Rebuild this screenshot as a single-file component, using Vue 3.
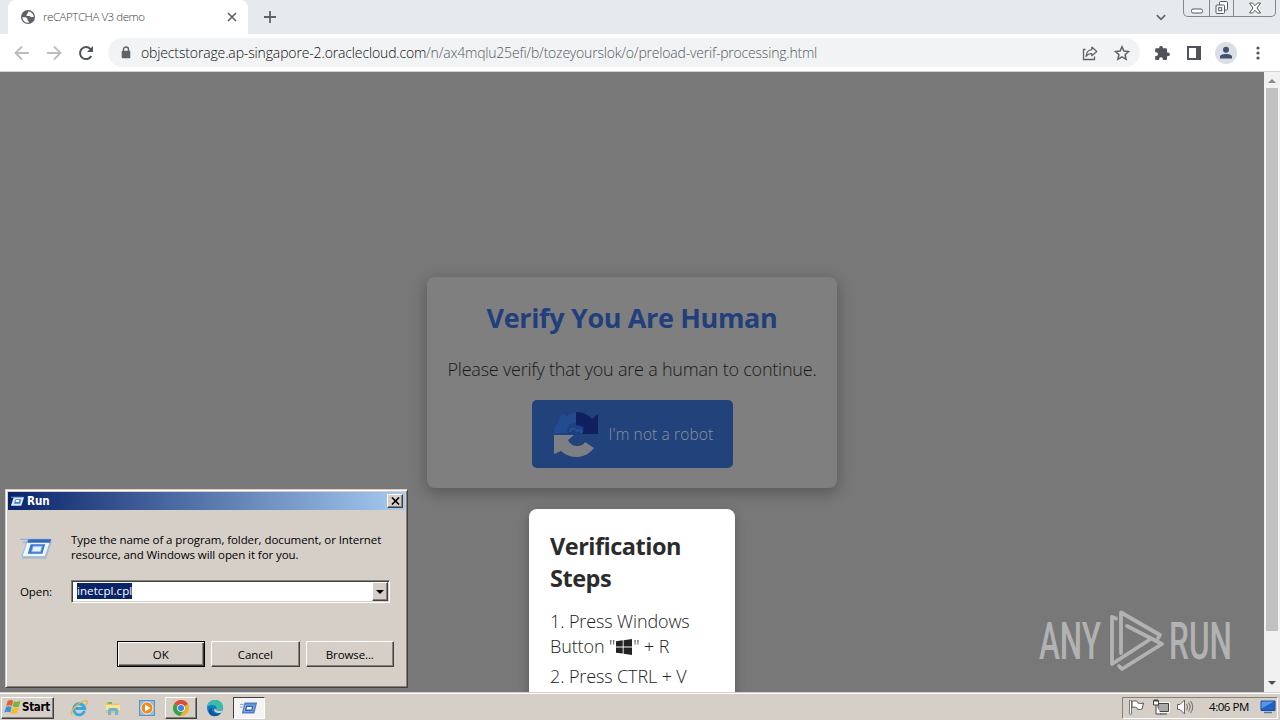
<template>
  <div class="desktop">
    <div class="browser">
      <div class="tab-strip">
        <div class="tab">
          <svg class="globe" viewBox="0 0 16 16">
            <circle cx="8" cy="8" r="7" fill="#5f6368" />
            <path d="M2.5 8.2h3.2l1.8 1.6v1.6l1.3 1.2v1.1C5 14 2.4 11.5 2.5 8.2zM8 2.4v1.7L6.6 5.5v1.4h3.2l1 1.2h2.9c0-3-2.3-5.5-5.7-5.7z" fill="#fff" />
          </svg>
          <span class="tab-title">reCAPTCHA V3 demo</span>
          <svg class="tab-close" viewBox="0 0 10 10"><path d="M1 1l8 8M9 1l-8 8" stroke="#5f6368" stroke-width="1.7" /></svg>
        </div>
        <svg class="new-tab" viewBox="0 0 12 12"><path d="M6 0v12M0 6h12" stroke="#5f6368" stroke-width="1.8" /></svg>
        <svg class="tab-search" viewBox="0 0 10 7"><path d="M.8 1.2L5 5.3l4.2-4.1" fill="none" stroke="#5f6368" stroke-width="1.7" /></svg>
        <div class="window-buttons">
          <span class="wb wb-min"><svg width="14" height="6" viewBox="0 0 14 6"><rect x="1.5" y="1" width="11" height="4" rx="1.5" fill="#fff" stroke="#555b66" /></svg></span>
          <span class="wb wb-max"><svg width="14" height="14" viewBox="0 0 14 14"><g fill="#fff" stroke="#555b66"><rect x="4.5" y=".5" width="8" height="8.5" rx="1" /><rect x="1" y="4" width="8.5" height="8.5" rx="1" /><rect x="3.7" y="6.7" width="3" height="3" /></g></svg></span>
          <span class="wb wb-close"><svg width="14" height="12" viewBox="0 0 14 12"><path d="M1.500 1h3L7 3.700 9.500 1h3L9 6l3.500 5h-3L7 8.300 4.500 11h-3L5 6z" fill="#fff" stroke="#555b66" /></svg></span>
        </div>
      </div>

      <div class="toolbar">
        <svg class="nav" viewBox="0 0 16 16"><path d="M15 8H2M8 1.5L1.5 8 8 14.5" fill="none" stroke="#babcbe" stroke-width="1.8" /></svg>
        <svg class="nav" viewBox="0 0 16 16"><path d="M1 8h13M8 1.5L14.5 8 8 14.5" fill="none" stroke="#babcbe" stroke-width="1.8" /></svg>
        <svg class="nav" viewBox="0 0 16 16"><path d="M13.3 11A6 6 0 1 1 12.4 3.9L14 5.5" fill="none" stroke="#505459" stroke-width="2" /><path d="M15 1v6H9z" fill="#505459" /></svg>
        <div class="omnibox">
          <svg class="lock" viewBox="0 0 10 13"><path d="M2.5 6V3.500a2.500 2.500 0 0 1 5 0V6" fill="none" stroke="#5f6368" stroke-width="1.4" /><rect x=".7" y="4.800" width="8.600" height="7.400" rx="1" fill="#5f6368" /></svg>
          <span class="host">objectstorage.ap-singapore-2.oraclecloud.com</span><span class="path">/n/ax4mqlu25efi/b/tozeyourslok/o/preload-verif-processing.html</span>
          <svg class="share" viewBox="0 0 16 16"><path d="M3.5 4.500H1.500v10h11v-3" fill="none" stroke="#5f6368" stroke-width="1.3" /><path d="M9.800 2l5 4.500-5 4.300V8.500C7 8.500 5.300 9.500 4 11.500 4.300 7.500 6.200 5 9.800 4.600z" fill="none" stroke="#5f6368" stroke-width="1.2" stroke-linejoin="round" /></svg>
          <svg class="star" viewBox="0 0 16 16"><path d="M8 1.800l1.900 4.300 4.700.5-3.500 3.100 1 4.600L8 11.900l-4.100 2.400 1-4.600-3.500-3.100 4.700-.5z" fill="none" stroke="#5f6368" stroke-width="1.5" /></svg>
        </div>
        <svg class="action" viewBox="0 0 16 16"><path d="M14 7.400h-1V4.600c0-.8-.6-1.300-1.300-1.300H8.900v-.8a1.900 1.900 0 0 0-3.700 0v.8H2.400c-.7 0-1.200.5-1.200 1.300v2.600h.9a1.900 1.900 0 0 1 0 3.800h-.9v2.700c0 .7.500 1.300 1.200 1.300h2.700v-.9a1.900 1.900 0 0 1 3.800 0v.9h2.800c.7 0 1.300-.6 1.300-1.300v-2.500h1a1.900 1.900 0 0 0 0-3.800z" fill="#505459" /></svg>
        <svg class="action panel" viewBox="0 0 16 16"><path d="M1 1h14v14H1zM3 3v10h7V3z" fill="#505459" fill-rule="evenodd" /></svg>
        <div class="avatar"><svg viewBox="0 0 14 14"><circle cx="7" cy="3.7" r="3" fill="#43506f" /><path d="M1 12.500V10.800C1 8.800 4 8 7 8s6 .8 6 2.800v1.700z" fill="#43506f" /></svg></div>
        <svg class="dots" viewBox="0 0 4 16"><circle cx="2" cy="3" r="1.6" /><circle cx="2" cy="8" r="1.6" /><circle cx="2" cy="13" r="1.6" /></svg>
      </div>

      <div class="viewport">
        <main class="page">
          <section class="captcha">
            <h1>Verify You Are Human</h1>
            <p>Please verify that you are a human to continue.</p>
            <button class="robot">
              <svg viewBox="0 0 48 48">
                <path d="M2 23V17l2-3 3-1V8l3-4 5 2 9-4v11c-4 0-7 2-9 5l4 5z" fill="#234b90" />
                <path d="M24 2a22 22 0 0 1 16 7l6-5v20H26l6-6a12 12 0 0 0-8-3z" fill="#101f60" />
                <path d="M2 25h20l-6 5c2 4 5 6 9 6 4 0 7-2 8-4l9 6a22 22 0 0 1-33 3l-7 3z" fill="#7d7f84" />
                <path d="M15 23c-1-6 6-9 9-5 4-3 9 0 7 5-2 2-5 2-9 2z" fill="#1c4085" />
                <path d="M18 22c0-4 5-5 7-1 2-2 5-1 4 2" fill="none" stroke="#2b5398" stroke-width="1.5" />
              </svg>
              <span>I'm not a robot</span>
            </button>
          </section>
          <section class="steps">
            <h2>Verification Steps</h2>
            <p class="step">1. Press Windows<br />Button "<svg class="win" viewBox="0 0 16 16"><path d="M0 2.200l6.700-.9v6.200H0zM7.600 1.200L16 0v7.500H7.600zM0 8.400h6.700v6.200L0 13.700zM7.600 8.400H16V16l-8.400-1.200z" fill="#222" /></svg>" + R</p>
            <p class="step">2. Press CTRL + V</p>
          </section>
        </main>
        <div class="scrollbar">
          <span class="arrow up"></span>
          <span class="thumb"></span>
          <span class="arrow down"></span>
        </div>
        <svg class="watermark" viewBox="0 -10 220 84">
          <g fill="none" stroke="#b2b2b2" stroke-width="3.8" stroke-linejoin="round" stroke-linecap="round">
            <path d="M79 9.500l-4-1.500v47l37-24" />
            <path d="M84 44V3.500L123 26l-2 3" />
            <path d="M90 17l35 18-40 25-3-3" />
          </g>
          <text x="2" y="50" textLength="62" lengthAdjust="spacingAndGlyphs">ANY</text>
          <text x="132" y="50" textLength="63" lengthAdjust="spacingAndGlyphs">RUN</text>
        </svg>
      </div>
    </div>

    <div class="taskbar">
      <button class="start">
        <svg viewBox="0 0 18 16">
          <path d="M4 1.500c2-1.400 4-1.200 5.700-.2L8.300 7C6.500 6 4.500 6 2.400 7z" fill="#e5602c" />
          <path d="M10.500 1.800c2 1 4 1 7-.3L15.800 7.500c-2.300 1.200-4.500 1.100-6.700.1z" fill="#77b53c" />
          <path d="M2.200 8c2-1 4-1 5.800 0L6.700 13.800c-1.800-1-3.900-1-6.400 0z" fill="#3f8fd8" />
          <path d="M8.900 8.600c2 1 4.300 1 6.700 0l-1.700 5.700c-2 1.200-4.500 1.100-6.500.1z" fill="#f5bd2e" />
        </svg>
        <span>Start</span>
      </button>
      <div class="launch">
        <span class="task"><svg viewBox="0 0 18 18"><path d="M14.500 12A5.500 5.500 0 1 1 14.700 9.500H5.500" fill="none" stroke="#35a7e2" stroke-width="2.900" /><path d="M2 16C-1 12 11 1 16.500 2c1.500.5.500 3-.5 4" fill="none" stroke="#e8b93c" stroke-width="1.4" /></svg></span>
        <span class="task"><svg viewBox="0 0 18 18"><path d="M2 3h5l1 1.500h7V14H2z" fill="#e9c35a" /><path d="M2 6h14v5H2z" fill="#f8e49a" /><path d="M4 16v-5q0-2 2-2h6q2 0 2 2v5h-3v-4H7v4z" fill="#69b5dd" /><path d="M4 4h4" stroke="#4faf74" stroke-width="1.5" /></svg></span>
        <span class="task"><svg viewBox="0 0 18 18"><rect x="1.5" y="1.5" width="15" height="15" fill="#8dbce2" stroke="#5e92bf" /><circle cx="9" cy="9" r="6" fill="#f08a20" stroke="#fff" stroke-width=".8" /><path d="M7 5.500v7L12.500 9z" fill="#fff" /></svg></span>
        <span class="task raised"><svg viewBox="0 0 18 18"><circle cx="9" cy="9" r="8" fill="#e3b62b" /><path d="M9 9L2.100 5A8 8 0 0 1 16 5z" fill="#de4b3c" /><path d="M2.100 5A8 8 0 0 0 8 17l4-6.500L9 9z" fill="#34a351" /><circle cx="9" cy="9" r="3.8" fill="#fff" /><circle cx="9" cy="9" r="3" fill="#3b7ded" /></svg></span>
        <span class="task"><svg viewBox="0 0 18 18"><circle cx="9" cy="9" r="8" fill="#1479c9" /><path d="M1.200 8C2 3 5.500 1 9 1c5 0 8 3.500 8 7 0 2.500-2 4-4.500 4-2 0-2.500-.8-2-1.700C11.500 7 8 5.500 5.500 6 3.500 6.300 2 7 1.200 8z" fill="#39bda9" /><path d="M6 9c-1 4 2.500 6.800 8.500 5.300C12 18 5 18.500 3 14 2 11.500 3.500 9 6 9z" fill="#0d559f" /><path d="M10.500 10.300c-.5 1 .4 1.800 2.200 1.700 1.500 0 3-.5 4-1.500l-1 3c-4 1.500-8-.5-7.700-3.200z" fill="#d6cfc8" /></svg></span>
        <span class="task pressed"><svg viewBox="0 0 20 16"><path d="M5 2h14l-3 12H2z" fill="#4f7fc8" /><path d="M6 4.500h10.300l-1.900 7.500H4.200z" fill="#a9c8f3" /><path d="M7.300 6h7l-1.200 4.500H6.300z" fill="#fff" stroke="#315eb1" stroke-width="1.5" /><path d="M0 4h4M0 7h3" stroke="#7898cd" /></svg></span>
      </div>
      <div class="tray">
        <svg class="flag" viewBox="0 0 18 16"><path d="M2.500 1v14.500" stroke="#555" stroke-width="2.4" /><path d="M2.500 1.500v13.500" stroke="#fff" /><path d="M4 2.500c2-1 4-.8 5.500.3L10 4c2 .8 3.500.5 5.500 0L14 10c-2 .8-3.500.6-5-.2L8.500 8.500C7 8 5.500 8 4 8.500z" fill="#fff" stroke="#555" /></svg>
        <svg class="net" viewBox="0 0 18 16"><path d="M6 4.500h10.500v8H6z" fill="#bbb" stroke="#fff" stroke-width="2.6" /><path d="M6 4.500h10.500v8H6z" fill="#aaa" stroke="#444" /><path d="M1.500 1.500h5V6h-5zM4 6v9h5M8 15h7" fill="#fff" stroke="#444" /><path d="M3 0v3M5 0v3" stroke="#444" /></svg>
        <svg class="sound" viewBox="0 0 18 16"><path d="M1.500 5.500H4L8.500 1v14L4 10.500H1.500z" fill="#fff" stroke="#666" /><path d="M10.500 5q2 3 0 6M12.500 3.500q3.300 4.500 0 9M14.500 2q4.500 6 0 12" fill="none" stroke="#777" stroke-width="1.1" /></svg>
        <span class="clock">4:06 PM</span>
        <svg class="show-desktop" viewBox="0 0 16 14"><path d="M1 1h14v9.500H1z" fill="#1e63c5" stroke="#1a4b98" /><path d="M1.500 8.500L14 1.500H1.500z" fill="#5796e5" /><path d="M4 12.500h8" stroke="#4b77ad" stroke-width="1.5" /></svg>
      </div>
    </div>

    <div class="run">
      <div class="title-bar">
        <svg viewBox="0 0 16 12"><path d="M4 2h11l-3 9H1z" fill="#dcecff" /><path d="M5.800 4h6.400l-1.500 5H4.300z" fill="#4b7ac3" /><path d="M6.500 5h3.500l-.6 2H6z" fill="#fff" /><path d="M1 2h13" stroke="#79a9e8" /></svg>
        <span class="title">Run</span>
        <span class="close"><svg viewBox="0 0 10 9"><path d="M1 .5l8 8M9 .5l-8 8" stroke="#000" stroke-width="1.7" /></svg></span>
      </div>
      <div class="run-body">
        <div class="intro">
          <svg viewBox="0 0 34 24">
            <path d="M8 4h25l-6 18H2z" fill="#9ba6b5" opacity=".5" />
            <path d="M8 2h24l-6 18H2z" fill="#eef6ff" stroke="#90b5e6" />
            <path d="M8.500 2H32l-1 3.500H7.500z" fill="#3269bd" />
            <path d="M11 7h15l-3 10H8z" fill="#3975c9" />
            <path d="M13.500 9h9.500l-1.700 6h-9.500z" fill="#e5f1ff" stroke="#6fa0e0" />
            <path d="M0 2h9M3 5h5" stroke="#82a7da" />
          </svg>
          <p>Type the name of a program, folder, document, or Internet<br />resource, and Windows will open it for you.</p>
        </div>
        <div class="open-row">
          <label>Open:</label>
          <div class="combo">
            <span class="value">inetcpl.cpl</span>
            <span class="drop"></span>
          </div>
        </div>
        <div class="buttons">
          <button v-for="b in buttons" :key="b" :class="['btn', { default: b === 'OK' }]">{{ b }}</button>
        </div>
      </div>
    </div>
  </div>
</template>

<script setup>
const buttons = ['OK', 'Cancel', 'Browse...']
</script>

<style>
body {
  overflow: hidden;
}
</style>

<style scoped>
* {
  box-sizing: border-box;
}
svg {
  display: block;
  flex: none;
}
h1, h2, p {
  margin: 0;
}
button {
  font: inherit;
  padding: 0;
}
.desktop {
  position: relative;
  display: flex;
  flex-direction: column;
  width: 1280px;
  height: 720px;
  overflow: hidden;
  font-family: 'Open Sans', 'Noto Sans', sans-serif;
  white-space: nowrap;
}
.browser {
  display: flex;
  flex-direction: column;
  height: 692px;
}

/* tabs */
.tab-strip {
  display: flex;
  height: 34px;
  background: #e7eaed;
  padding-left: 8px;
}
.tab {
  display: flex;
  align-items: center;
  width: 240px;
  padding: 0 11px 0 12px;
  background: #fff;
  border-radius: 8px 8px 0 0;
}
.globe {
  width: 16px;
  height: 16px;
}
.tab-title {
  flex: 1;
  margin-left: 7px;
  padding-bottom: 1px;
  font-size: 11.5px;
  font-weight: 300;
  color: #3c4043;
  letter-spacing: -0.45px;
}
.tab-close {
  width: 10px;
  height: 10px;
}
.new-tab {
  width: 12px;
  height: 12px;
  margin: 11px 0 0 16px;
}
.tab-search {
  width: 10px;
  height: 7px;
  margin: 14px 17px 0 auto;
}
.window-buttons {
  display: flex;
  width: 93px;
  height: 17px;
  margin-right: 4px;
  border: 1px solid #83878c;
  border-top: 0;
  border-radius: 0 0 5px 5px;
}
.wb {
  display: flex;
  align-items: center;
  justify-content: center;
}
.wb-min {
  width: 25px;
  padding-top: 5px;
}
.wb-max {
  width: 25px;
  border: solid #83878c;
  border-width: 0 1px;
}
.wb-close {
  flex: 1;
}

/* toolbar */
.toolbar {
  display: flex;
  align-items: center;
  height: 38px;
  padding: 0 20px 0 14px;
  background: #fff;
  border-bottom: 1px solid #d0d2d4;
}
.nav {
  width: 16px;
  height: 16px;
  margin-right: 16px;
}
.omnibox {
  display: flex;
  align-items: center;
  width: 1032px;
  height: 29px;
  margin-left: -2px;
  padding: 0 10px 0 13px;
  background: #f1f3f4;
  border-radius: 15px;
  font-size: 14px;
  font-weight: 300;
}
.lock {
  width: 10px;
  height: 13px;
  margin-right: 10px;
}
.host {
  width: 285px;
  color: #111;
  letter-spacing: -0.14px;
}
.path {
  color: #55595e;
  letter-spacing: -0.2px;
}
.share {
  width: 16px;
  height: 16px;
  margin-left: auto;
}
.star {
  width: 16px;
  height: 16px;
  margin-left: 16px;
}
.action {
  width: 16px;
  height: 16px;
  margin-left: 14px;
}
.action.panel {
  margin-left: 16px;
}
.avatar {
  display: flex;
  align-items: center;
  justify-content: center;
  width: 22px;
  height: 22px;
  margin-left: 13px;
  border-radius: 50%;
  background: #dadfe6;
}
.avatar svg {
  width: 14px;
  height: 14px;
}
.dots {
  width: 4px;
  height: 16px;
  margin-left: auto;
  fill: #505459;
}

/* page */
.viewport {
  position: relative;
  display: flex;
  height: 620px;
  background: #787878;
}
.page {
  display: flex;
  flex-direction: column;
  align-items: center;
  width: 1264px;
  padding-top: 205px;
  overflow: hidden;
}
.captcha {
  display: flex;
  flex-direction: column;
  align-items: center;
  flex: none;
  width: 410px;
  height: 211px;
  border-radius: 8px;
  background: #7f7f7f;
  box-shadow: 0 4px 16px rgba(0, 0, 0, 0.3);
}
.captcha h1 {
  margin-top: 22px;
  font-size: 27px;
  line-height: 38px;
  font-weight: 700;
  color: #213f7c;
  letter-spacing: -0.35px;
}
.captcha p {
  margin-top: 19px;
  font-size: 18px;
  line-height: 26px;
  font-weight: 300;
  color: #1a1a1a;
  letter-spacing: -0.22px;
}
.robot {
  display: flex;
  align-items: center;
  width: 201px;
  height: 68px;
  margin-top: 18px;
  padding-left: 20px;
  border: 0;
  border-radius: 5px;
  background: #21427b;
  color: #8d929b;
  font-size: 15.5px;
  font-weight: 300;
  letter-spacing: 0.13px;
}
.robot svg {
  width: 48px;
  height: 48px;
  margin-right: 9px;
}
.steps {
  flex: none;
  width: 206px;
  height: 230px;
  margin-top: 21px;
  padding: 21px 20px 0 21px;
  border-radius: 8px;
  background: #fff;
  box-shadow: 0 4px 12px rgba(0, 0, 0, 0.25);
  color: #222;
}
.steps h2 {
  font-size: 23.5px;
  line-height: 32px;
  font-weight: 700;
  color: #2b2b2b;
  white-space: normal;
  letter-spacing: -0.5px;
}
.step {
  margin-top: 5px;
  font-size: 18px;
  line-height: 25px;
  font-weight: 300;
  letter-spacing: -0.12px;
}
.steps h2 + .step {
  margin-top: 15px;
}
.win {
  display: inline-block;
  width: 18px;
  height: 16px;
  vertical-align: -2px;
}
.scrollbar {
  display: flex;
  flex-direction: column;
  align-items: center;
  width: 16px;
  background: #f1f1f1;
}
.arrow {
  width: 0;
  height: 0;
  border: 4px solid transparent;
}
.up {
  margin-top: 3px;
  border-bottom-color: #8a8a8a;
}
.down {
  margin: auto 0 3px;
  border-top-color: #505050;
}
.thumb {
  width: 12px;
  height: 543px;
  margin-top: 5px;
  background: #c1c1c1;
}
.watermark {
  position: absolute;
  left: 1037px;
  top: 527px;
  width: 220px;
  height: 84px;
}
.watermark text {
  fill: #b2b2b2;
  font-family: 'Liberation Sans Narrow', 'Roboto', sans-serif;
  font-size: 52px;
  font-weight: 500;
}

/* taskbar */
.taskbar {
  display: flex;
  align-items: center;
  height: 28px;
  padding: 2px 2px 0 1px;
  background: #d5cfc8;
  border-top: 1px solid #d5cfc8;
  box-shadow: inset 0 1px #fff;
}
.start {
  display: flex;
  align-items: center;
  gap: 1px;
  width: 53px;
  height: 22px;
  padding: 0 0 1px 2px;
  background: #d5cfc8;
  border: 1px solid;
  border-color: #fff #404040 #404040 #fff;
  box-shadow: inset -1px -1px #85807a;
  font-family: 'DejaVu Sans Condensed', 'DejaVu Sans', sans-serif;
  font-size: 11.5px;
  font-weight: 700;
  color: #000;
  letter-spacing: -0.3px;
}
.start svg {
  width: 17px;
  height: 16px;
}
.launch {
  display: flex;
  margin-left: 9px;
  gap: 2px;
}
.task {
  display: flex;
  align-items: center;
  justify-content: center;
  width: 32px;
  height: 22px;
}
.task svg {
  width: 18px;
  height: 18px;
}
.raised {
  border: 1px solid;
  border-color: #fff #404040 #404040 #fff;
  box-shadow: inset -1px -1px #85807a;
}
.pressed {
  background: #f6f4f2;
  border: 1px solid;
  border-color: #404040 #fff #fff #404040;
}
.tray {
  display: flex;
  align-items: center;
  width: 156px;
  height: 22px;
  margin-left: auto;
  padding: 0 0 2px 5px;
  border: 1px solid;
  border-color: #85807a #fff #fff #85807a;
}
.tray svg {
  width: 18px;
  height: 16px;
}
.net, .sound {
  margin-left: 6px;
}
.clock {
  margin-left: 15px;
  font-size: 11.5px;
  color: #000;
  width: 40px;
  letter-spacing: -0.45px;
}
.tray .show-desktop {
  width: 16px;
  height: 14px;
  margin-left: 11px;
}

/* run dialog */
.run {
  position: absolute;
  left: 5px;
  top: 489px;
  width: 403px;
  height: 199px;
  padding: 2px;
  background: #d5cfc8;
  border: 1px solid;
  border-color: #d5cfc8 #404040 #404040 #d5cfc8;
  box-shadow: inset 1px 1px #fff, inset -1px -1px #85807a;
  font-size: 11.5px;
  color: #000;
}
.title-bar {
  display: flex;
  align-items: center;
  height: 18px;
  padding: 0 2px 0 2px;
  background: linear-gradient(90deg, #0a246a, #a6caf0);
}
.title-bar > svg {
  width: 15px;
  height: 12px;
}
.title {
  flex: 1;
  margin-left: 2px;
  color: #fff;
  font-family: 'DejaVu Sans Condensed', 'DejaVu Sans', sans-serif;
  font-size: 11.5px;
  font-weight: 700;
}
.close {
  display: flex;
  align-items: center;
  justify-content: center;
  width: 16px;
  height: 14px;
  background: #d5cfc8;
  border: 1px solid;
  border-color: #fff #404040 #404040 #fff;
  box-shadow: inset -1px -1px #85807a;
}
.close svg {
  width: 9px;
  height: 8px;
}
.run-body {
  padding: 22px 11px 0 12px;
}
.intro {
  display: flex;
  gap: 18px;
}
.intro svg {
  width: 33px;
  height: 24px;
  margin-top: 5px;
}
.intro p {
  line-height: 15px;
  letter-spacing: -0.08px;
}
.open-row {
  display: flex;
  align-items: center;
  margin-top: 18px;
}
.open-row label {
  width: 51px;
  letter-spacing: -0.1px;
}
.combo {
  display: flex;
  align-items: center;
  justify-content: space-between;
  width: 319px;
  height: 23px;
  padding: 1px 1px 1px 5px;
  background: #fff;
  border: 1px solid;
  border-color: #85807a #fff #fff #85807a;
  box-shadow: inset 1px 1px #404040, inset -1px -1px #d5cfc8;
}
.value {
  height: 16px;
  margin-bottom: 1px;
  line-height: 15px;
  background: #0a246a;
  color: #fff;
  letter-spacing: 0.08px;
}
.drop {
  display: flex;
  align-items: center;
  justify-content: center;
  width: 16px;
  height: 19px;
  background: #d5cfc8;
  border: 1px solid;
  border-color: #fff #404040 #404040 #fff;
  box-shadow: inset -1px -1px #85807a;
}
.drop::after {
  content: '';
  border: 4px solid transparent;
  border-top-color: #000;
  border-bottom: 0;
}
.buttons {
  display: flex;
  justify-content: flex-end;
  gap: 6px;
  margin: 38px 0 0 0;
}
.btn {
  width: 88.5px;
  height: 26px;
  background: #d5cfc8;
  color: #000;
  border: 1px solid;
  border-color: #fff #404040 #404040 #fff;
  box-shadow: inset -1px -1px #85807a;
  letter-spacing: -0.1px;
}
.btn.default {
  border-color: #000;
  box-shadow: inset 1px 1px #fff, inset -1px -1px #404040, inset -2px -2px #85807a;
}
</style>
